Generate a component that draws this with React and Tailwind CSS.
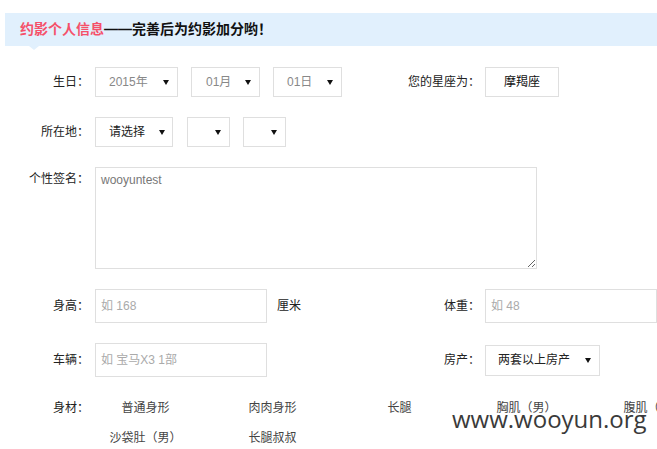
import React from "react";

const FONT = "font-['Liberation_Sans','Noto_Sans_CJK_SC',sans-serif]";

function Arrow() {
  return (
    <svg width="6" height="5" viewBox="0 0 6 5" className="shrink-0">
      <polygon points="0,0 6,0 3,5" fill="#111" />
    </svg>
  );
}

function Select({ w, h = "h-[30px]", text, color = "text-[#222]", pl = "pl-[13px]", pr = "pr-[8px]" }) {
  return (
    <div className={`${w} ${h} ${pl} ${pr} border border-[#dfdfdf] bg-white flex items-center justify-between text-[12px] ${color}`}>
      <span>{text}</span>
      <Arrow />
    </div>
  );
}

function Label({ children }) {
  return <div className="w-[95px] shrink-0 pr-[6px] text-right text-[12px] text-[#222]">{children}</div>;
}

function RLabel({ children }) {
  return <div className="w-[85px] shrink-0 text-right text-[12px] text-[#222]">{children}</div>;
}

function Input({ ph }) {
  return (
    <input
      placeholder={ph}
      className={`w-[172px] h-[34px] border border-[#dfdfdf] px-[5px] text-[12px] text-[#333] placeholder:text-[#aaa] outline-none ${FONT}`}
    />
  );
}

export default function App() {
  const shapes = ["普通身形", "肉肉身形", "长腿", "胸肌（男）", "腹肌（男）", "沙袋肚（男）", "长腿叔叔"];
  return (
    <div className={`relative w-[657px] h-[449px] overflow-hidden bg-white ${FONT}`}>
      <div className="w-[780px]">
        {/* header */}
        <div className="relative mt-[13px] ml-[5px] h-[33px] bg-[#e1f0fd] pl-[15px] text-[14px] font-bold leading-[33px] text-[#111]">
          <span className="text-[#f5506a]">约影个人信息</span>——完善后为约影加分哟！
          <div className="absolute left-[24px] bottom-[-4px] w-0 h-0 border-l-[5px] border-r-[5px] border-t-[4px] border-l-transparent border-r-transparent border-t-[#e1f0fd]" />
        </div>

        {/* birthday row */}
        <div className="mt-[21px] flex h-[30px] items-center">
          <div className="flex w-[395px] shrink-0 items-center">
            <Label>生日：</Label>
            <Select w="w-[83px]" text="2015年" color="text-[#888]" />
            <div className="ml-[13px]">
              <Select w="w-[69px]" text="01月" color="text-[#888]" pl="pl-[14px]" />
            </div>
            <div className="ml-[13px]">
              <Select w="w-[69px]" text="01日" color="text-[#888]" />
            </div>
          </div>
          <RLabel>您的星座为：</RLabel>
          <div className="ml-[5px] flex h-[30px] w-[74px] items-center justify-center border border-[#dfdfdf] text-[12px] text-[#111]">
            摩羯座
          </div>
        </div>

        {/* location row */}
        <div className="mt-[20px] flex h-[30px] items-center">
          <Label>所在地：</Label>
          <Select w="w-[78px]" text="请选择" pr="pr-[7px]" />
          <div className="ml-[14px]">
            <Select w="w-[43px]" text="" />
          </div>
          <div className="ml-[13px]">
            <Select w="w-[43px]" text="" />
          </div>
        </div>

        {/* signature */}
        <div className="mt-[20px] flex items-start">
          <div className="w-[95px] shrink-0 pr-[6px] text-right text-[12px] leading-[24px] text-[#222]">个性签名：</div>
          <textarea
            defaultValue="wooyuntest"
            className={`block w-[442px] h-[102px] border border-[#dfdfdf] p-[5px] text-[12px] leading-[14px] text-[#777] outline-none ${FONT}`}
          />
        </div>

        {/* height / weight */}
        <div className="mt-[20px] flex h-[34px] items-center">
          <div className="flex w-[395px] shrink-0 items-center">
            <Label>身高：</Label>
            <Input ph="如 168" />
            <span className="ml-[10px] text-[12px] text-[#222]">厘米</span>
          </div>
          <RLabel>体重：</RLabel>
          <div className="ml-[5px]">
            <Input ph="如 48" />
          </div>
        </div>

        {/* car / house */}
        <div className="mt-[20px] flex h-[34px] items-center">
          <div className="flex w-[395px] shrink-0 items-center">
            <Label>车辆：</Label>
            <Input ph="如 宝马X3 1部" />
          </div>
          <RLabel>房产：</RLabel>
          <div className="ml-[5px]">
            <Select w="w-[115px]" h="h-[31px]" text="两套以上房产" pl="pl-[12px]" pr="pr-[8px]" />
          </div>
        </div>

        {/* body shape */}
        <div className="mt-[16px] flex items-start">
          <div className="w-[89px] shrink-0 text-right text-[12px] leading-[30px] text-[#222]">身材：</div>
          <div className="ml-[-7px] grid grid-cols-[repeat(5,127px)]">
            {shapes.map((s) => (
              <div key={s} className="text-center text-[12px] leading-[30px] text-[#444]">
                {s}
              </div>
            ))}
          </div>
        </div>
      </div>

      {/* watermark */}
      <div className="pointer-events-none absolute left-[452px] top-[407px] font-['Open_Sans',sans-serif] text-[24px] leading-[24px] text-[#3a3a3a]">
        www.wooyun.org
      </div>
    </div>
  );
}
